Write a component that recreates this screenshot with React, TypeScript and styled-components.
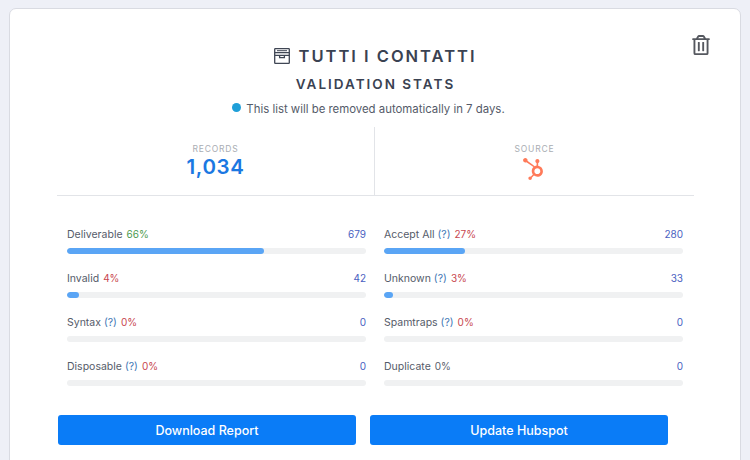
import styled, { createGlobalStyle } from "styled-components";
import { FaHubspot, FaRegTrashAlt } from "react-icons/fa";

interface StatData {
  label: string
  help?: boolean
  percent: number
  count: number
  good?: boolean
  neutral?: boolean
}

const stats: StatData[] = [
  { label: "Deliverable", percent: 66, count: 679, good: true },
  { label: "Accept All", help: true, percent: 27, count: 280 },
  { label: "Invalid", percent: 4, count: 42 },
  { label: "Unknown", help: true, percent: 3, count: 33 },
  { label: "Syntax", help: true, percent: 0, count: 0 },
  { label: "Spamtraps", help: true, percent: 0, count: 0 },
  { label: "Disposable", help: true, percent: 0, count: 0 },
  { label: "Duplicate", percent: 0, count: 0, neutral: true },
];

const App = () => {
  return (
    <>
      <GlobalStyle />
      <Card>
        <DeleteButton type="button" aria-label="Delete list">
          <FaRegTrashAlt />
        </DeleteButton>
        <Title>
          <svg width="16" height="16" viewBox="0 0 16 16" fill="none" stroke="#3f4654" strokeWidth="1.3">
            <rect x="0.7" y="0.7" width="14.6" height="14.6" rx="0.6" />
            <path d="M0.7 4.6H15.3M0.7 7.4H15.3M5.6 7.4V9.6H10.4V7.4" />
            <path d="M3 2.7H13" strokeWidth="1" />
          </svg>
          TUTTI I CONTATTI
        </Title>
        <Subtitle>VALIDATION STATS</Subtitle>
        <Notice>
          <NoticeDot />
          This list will be removed automatically in 7 days.
        </Notice>
        <Summary>
          <SummaryCell>
            <SummaryLabel>RECORDS</SummaryLabel>
            <SummaryValue>1,034</SummaryValue>
          </SummaryCell>
          <SummaryCell>
            <SummaryLabel>SOURCE</SummaryLabel>
            <SourceIcon><FaHubspot /></SourceIcon>
          </SummaryCell>
        </Summary>
        <StatGrid>
          {stats.map((stat) => (
            <Stat key={stat.label}>
              <StatHead>
                <span>
                  {stat.label}
                  {stat.help && <> <Help>(?)</Help></>}
                  <Percent $good={stat.good} $neutral={stat.neutral}>{stat.percent}%</Percent>
                </span>
                <Count>{stat.count}</Count>
              </StatHead>
              <Track>
                <Fill style={{ width: `${stat.percent}%` }} />
              </Track>
            </Stat>
          ))}
        </StatGrid>
        <Actions>
          <ActionButton type="button">Download Report</ActionButton>
          <ActionButton type="button">Update Hubspot</ActionButton>
        </Actions>
      </Card>
    </>
  );
};

const GlobalStyle = createGlobalStyle`
  html, body {
    margin: 0;
    height: 460px;
    overflow: hidden;
    background: #eef0f7;
    font-family: "Inter", "Liberation Sans", sans-serif;
  }
`;

const Card = styled.div`
  position: relative;
  box-sizing: border-box;
  width: 732px;
  height: 470px;
  margin: 8px 0 0 9px;
  padding: 35px 46px 0 47px;
  background: #fff;
  border: 1px solid #d9dbe2;
  border-radius: 7px;
`;

const DeleteButton = styled.button`
  position: absolute;
  top: 26px;
  right: 29px;
  padding: 0;
  border: 0;
  background: none;
  color: #55585f;
  font-size: 20px;
  line-height: 0;
`;

const Title = styled.h1`
  display: flex;
  justify-content: center;
  align-items: center;
  gap: 8px;
  margin: 0;
  height: 24px;
  color: #3a4252;
  font-size: 16.5px;
  font-weight: 600;
  letter-spacing: 2px;
`;

const Subtitle = styled.h2`
  margin: 7px 0 0;
  color: #3a4252;
  font-size: 13.5px;
  line-height: 18px;
  font-weight: 600;
  letter-spacing: 2px;
  text-align: center;
`;

const Notice = styled.p`
  display: flex;
  justify-content: center;
  align-items: center;
  gap: 5px;
  margin: 7px 0 0;
  color: #555b69;
  font-size: 11.4px;
  line-height: 18px;
`;

const NoticeDot = styled.span`
  width: 9px;
  height: 9px;
  margin: -3px 0 0 -14px;
  border-radius: 50%;
  background: #1f9fd8;
`;

const Summary = styled.div`
  display: grid;
  grid-template-columns: 317px 1fr;
  height: 68px;
  margin-top: 9px;
  border-bottom: 1px solid #e2e4e8;
`;

const SummaryCell = styled.div`
  display: flex;
  flex-direction: column;
  align-items: center;
  padding-top: 16px;
  & + & {
    border-left: 1px solid #e2e4e8;
  }
`;

const SummaryLabel = styled.span`
  color: #a9adb3;
  font-size: 8.5px;
  line-height: 12px;
  letter-spacing: 0.8px;
`;

const SummaryValue = styled.span`
  color: #1b78e2;
  font-size: 20.5px;
  line-height: 24px;
  font-weight: 600;
  letter-spacing: 0.6px;
`;

const SourceIcon = styled.span`
  margin: 3px 3px 0 0;
  color: #ff7a59;
  font-size: 22px;
  line-height: 0;
`;

const StatGrid = styled.div`
  display: grid;
  grid-template-columns: 299px 299px;
  column-gap: 18px;
  row-gap: 16px;
  margin-top: 30px;
  padding-left: 10px;
`;

const Stat = styled.div`
  display: flex;
  flex-direction: column;
  gap: 4px;
`;

const StatHead = styled.div`
  display: flex;
  justify-content: space-between;
  height: 18px;
  color: #555b69;
  font-size: 10.5px;
  line-height: 16px;
`;

const Help = styled.span`
  color: #3f78b5;
`;

const Percent = styled.span<{ $good?: boolean; $neutral?: boolean }>`
  margin-left: 4px;
  font-size: 10px;
  color: ${(p) => (p.$good ? "#4c9a4f" : p.$neutral ? "#5a606c" : "#c8474f")};
`;

const Count = styled.span`
  font-size: 10px;
  color: #4a5fc1;
`;

const Track = styled.div`
  height: 6px;
  border-radius: 3px;
  background: #f0f1f2;
  overflow: hidden;
`;

const Fill = styled.div`
  height: 100%;
  border-radius: 3px;
  background: #5aa5f5;
`;

const Actions = styled.div`
  display: flex;
  gap: 14px;
  margin-top: 29px;
  padding-left: 1px;
`;

const ActionButton = styled.button`
  width: 298px;
  height: 30px;
  padding: 0;
  border: 0;
  border-radius: 3px;
  background: #0a7cf7;
  color: #fff;
  font-family: inherit;
  font-size: 12.5px;
  font-weight: 500;
`;

export default App;
